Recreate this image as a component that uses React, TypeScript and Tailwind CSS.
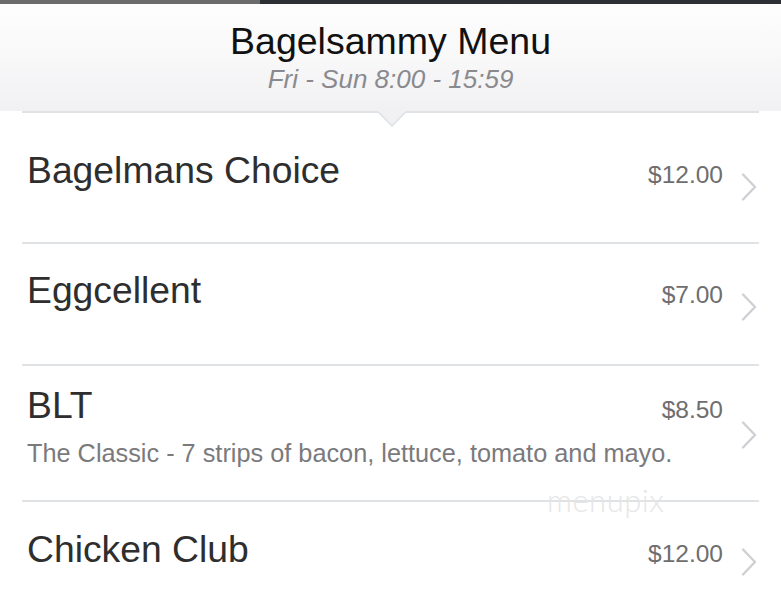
import React from "react";

type Item = {
  name: string;
  price: string;
  desc?: string;
  pt: string;
  h: string;
  chev: string;
};

const Chevron = ({ mt }: { mt: string }) => (
  <div className={`ml-[18px] shrink-0 ${mt}`}>
    <svg width="16" height="28" viewBox="0 0 16 28">
      <polyline
        points="2,1.5 14,14 2,26.5"
        fill="none"
        stroke="#cfd0d4"
        strokeWidth="2.4"
        strokeLinecap="round"
        strokeLinejoin="round"
      />
    </svg>
  </div>
);

const Divider = () => <div className="h-[2px] bg-[#dfe3e5]" />;

export default function App() {
  const items: Item[] = [
    { name: "Bagelmans Choice", price: "$12.00", pt: "pt-[39px]", h: "h-[129px]", chev: "mt-[21px]" },
    { name: "Eggcellent", price: "$7.00", pt: "pt-[28px]", h: "h-[120px]", chev: "mt-[21px]" },
    {
      name: "BLT",
      price: "$8.50",
      desc: "The Classic - 7 strips of bacon, lettuce, tomato and mayo.",
      pt: "pt-[21px]",
      h: "h-[134px]",
      chev: "mt-[34px]",
    },
    { name: "Chicken Club", price: "$12.00", pt: "pt-[29px]", h: "h-[87px]", chev: "mt-[17px]" },
  ];

  return (
    <div
      className="relative w-[781px] h-[589px] overflow-hidden bg-white"
      style={{ fontFamily: '"Liberation Sans", Arial, sans-serif' }}
    >
      {/* top status strip */}
      <div className="flex h-[4px]">
        <div className="w-[260px] bg-[#6b6b6b]" />
        <div className="flex-1 bg-[#2c3035]" />
      </div>

      {/* header */}
      <div className="h-[107px] bg-gradient-to-b from-[#fdfdfd] via-[#f8f8f9] to-[#f1f1f3] flex flex-col items-center pt-[19px]">
        <div className="text-[37.5px] leading-[37px] text-[#111111]">Bagelsammy Menu</div>
        <div className="mt-[6px] text-[26px] leading-[26px] italic text-[#8a8a8e]">
          Fri - Sun 8:00 - 15:59
        </div>
      </div>

      <div className="mx-[22px]">
        <div className="relative">
          <Divider />
          <div className="absolute left-[356px] top-[0px]">
            <svg width="28" height="17" viewBox="0 0 28 17">
              <polygon points="0,0 28,0 14,15" fill="#f1f1f3" />
              <polyline points="0.5,1 14,15 27.5,1" fill="none" stroke="#dfe3e5" strokeWidth="1.6" />
            </svg>
          </div>
        </div>

        {items.map((it, i) => (
          <React.Fragment key={it.name}>
            {i > 0 && <Divider />}
            <div className={`flex ${it.h} ${it.pt} pl-[5px] pr-[2px]`}>
              <div className="flex-1 flex flex-col">
                <div className="flex items-baseline justify-between">
                  <span className="text-[37.3px] leading-[37px] text-[#2e2e2e]">{it.name}</span>
                  <span className="text-[24.5px] leading-[25px] text-[#6e6e70]">{it.price}</span>
                </div>
                {it.desc && (
                  <div className="mt-[17px] text-[25.3px] leading-[25px] text-[#7a7a7c] whitespace-nowrap">
                    {it.desc}
                  </div>
                )}
              </div>
              <Chevron mt={it.chev} />
            </div>
          </React.Fragment>
        ))}
      </div>

      {/* watermark */}
      <div
        className="absolute left-[547px] top-[485px] text-[31px] leading-[31px] font-light tracking-[0.5px] text-[#e6e6e6]"
        style={{ fontFamily: "Lato, sans-serif" }}
      >
        menupix
      </div>
    </div>
  );
}
